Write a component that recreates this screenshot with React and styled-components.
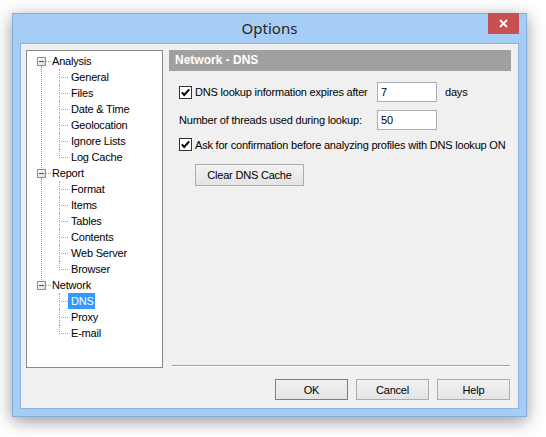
import React from "react"
import styled, { createGlobalStyle } from "styled-components"

const GlobalStyle = createGlobalStyle`
  html, body {
    margin: 0;
    padding: 0;
    background: #ffffff;
  }
  body {
    font-family: "Liberation Sans", Arial, sans-serif;
    font-size: 11px;
    color: #000;
  }
`

const treeData = [
  { title: "Analysis", items: ["General", "Files", "Date & Time", "Geolocation", "Ignore Lists", "Log Cache"] },
  { title: "Report", items: ["Format", "Items", "Tables", "Contents", "Web Server", "Browser"] },
  { title: "Network", items: ["DNS", "Proxy", "E-mail"] },
]

const Page = styled.div`
  padding: 13px 0 0 12px;
  height: 437px;
  box-sizing: border-box;
`

const Window = styled.div`
  width: 515px;
  height: 404px;
  box-sizing: border-box;
  background: #a6cdf6;
  border: 1px solid #86acd9;
  box-shadow: 0 4px 16px rgba(0, 0, 0, 0.42);
  display: flex;
  flex-direction: column;
`

const TitleBar = styled.div`
  height: 29px;
  display: grid;
  grid-template-columns: 40px 1fr 40px;
  align-items: start;
`

const Title = styled.div`
  grid-column: 2;
  text-align: center;
  font-family: "Segoe UI", "Noto Sans", sans-serif;
  font-size: 15px;
  line-height: 28px;
  color: #262626;
`

const CloseBtn = styled.div`
  grid-column: 3;
  justify-self: end;
  margin-right: 7px;
  width: 31px;
  height: 21px;
  margin-top: -1px;
  background: #c75050;
  display: flex;
  align-items: center;
  justify-content: center;
`

const Client = styled.div`
  margin: 0 7px 7px 7px;
  flex: 1;
  box-sizing: border-box;
  background: #f0f0f0;
  border: 1px solid #8fb2dc;
  display: flex;
  flex-direction: column;
`

const Body = styled.div`
  display: flex;
  padding: 6px 7px 0 5px;
`

const Tree = styled.div`
  width: 137px;
  height: 318px;
  box-sizing: border-box;
  background: #fff;
  border: 1px solid #828790;
  padding-top: 2px;
  letter-spacing: -0.2px;
`

const Group = styled.div`
  position: relative;
  &::before {
    content: "";
    display: ${(p) => (p.$last ? "none" : "block")};
    position: absolute;
    left: 14px;
    top: 13px;
    bottom: -3px;
    border-left: 1px dotted #a0a0a0;
  }
`

const ParentRow = styled.div`
  height: 16px;
  display: flex;
  align-items: center;
  padding-left: 10px;
`

const Dots = styled.span`
  width: 5px;
  border-top: 1px dotted #a0a0a0;
  margin-top: 1px;
`

const RowLabel = styled.span`
  line-height: 16px;
  padding: 0 1px 0 ${(p) => p.$pad || 1}px;
  white-space: nowrap;
  background: ${(p) => (p.$selected ? "#3399ff" : "transparent")};
  color: ${(p) => (p.$selected ? "#fff" : "#000")};
`

const ChildRow = styled.div`
  height: 16px;
  display: flex;
  margin-left: 32px;
`

const Connector = styled.span`
  width: 9px;
  box-sizing: border-box;
  align-self: flex-start;
  border-left: 1px dotted #a0a0a0;
  height: ${(p) => (p.$last ? "9px" : "16px")};
  ${(p) =>
    p.$last
      ? "border-bottom: 1px dotted #a0a0a0;"
      : "background: repeating-linear-gradient(90deg, #a0a0a0 0 1px, transparent 1px 2px) 1px 8px / 8px 1px no-repeat;"}
`

const Right = styled.div`
  flex: 1;
  margin-left: 6px;
  display: flex;
  flex-direction: column;
`

const Header = styled.div`
  height: 21px;
  background: #a0a0a0;
  color: #fff;
  font-weight: bold;
  font-size: 12px;
  line-height: 21px;
  padding-left: 6px;
`

const Form = styled.div`
  padding-left: 10px;
  padding-top: 11px;
  display: grid;
  grid-template-columns: 190px 60px auto;
  column-gap: 8px;
  letter-spacing: -0.2px;
`

const Cell = styled.div`
  display: flex;
  align-items: center;
  height: ${(p) => p.$h || 20}px;
  margin-top: ${(p) => p.$mt || 0}px;
  grid-column: ${(p) => p.$span || "auto"};
  white-space: nowrap;
`

const CheckLabel = styled.span`
  margin-left: 3px;
`

const TextInput = styled.div`
  width: 60px;
  height: 20px;
  box-sizing: border-box;
  background: #fff;
  border: 1px solid #abadb3;
  padding-left: 3px;
  line-height: 18px;
  margin-top: ${(p) => p.$mt || 0}px;
`

const Button = styled.div`
  width: ${(p) => p.$w || 73}px;
  height: ${(p) => p.$h || 21}px;
  box-sizing: border-box;
  border: 1px solid ${(p) => (p.$default ? "#3c8de6" : "#acacac")};
  background: linear-gradient(#f2f2f2, #e4e4e4);
  display: flex;
  align-items: center;
  justify-content: center;
  letter-spacing: -0.2px;
`

const ActionButton = styled(Button)`
  grid-column: 1 / span 3;
  margin: 12px 0 0 16px;
`

const Separator = styled.div`
  margin: auto 1px 1px 3px;
  border-top: 1px solid #a0a0a0;
  border-bottom: 1px solid #fff;
`

const Footer = styled.div`
  display: flex;
  justify-content: flex-end;
  gap: 8px;
  padding: 11px 8px 8px 0;
`

const MinusBox = () => (
  <svg width="9" height="9" viewBox="0 0 9 9">
    <defs>
      <linearGradient id="mb" x1="0" y1="0" x2="1" y2="1">
        <stop offset="0" stopColor="#ffffff" />
        <stop offset="1" stopColor="#d8d8d8" />
      </linearGradient>
    </defs>
    <rect x="0.5" y="0.5" width="8" height="8" fill="url(#mb)" stroke="#919191" />
    <line x1="2" y1="4.5" x2="7" y2="4.5" stroke="#2f56a8" strokeWidth="1" />
  </svg>
)

const CheckBox = () => (
  <svg width="13" height="13" viewBox="0 0 13 13">
    <rect x="0.5" y="0.5" width="12" height="12" fill="#fff" stroke="#333" />
    <path d="M2.8 6.4 L5.2 9 L10.2 3.4" fill="none" stroke="#000" strokeWidth="1.9" />
  </svg>
)

const CloseIcon = () => (
  <svg width="9" height="9" viewBox="0 0 9 9">
    <path d="M1 1 L8 8 M8 1 L1 8" stroke="#fff" strokeWidth="1.8" />
  </svg>
)

export default function App() {
  return (
    <Page>
      <GlobalStyle />
      <Window>
        <TitleBar>
          <Title>Options</Title>
          <CloseBtn>
            <CloseIcon />
          </CloseBtn>
        </TitleBar>
        <Client>
          <Body>
            <Tree>
              {treeData.map((g, gi) => (
                <Group key={g.title} $last={gi === treeData.length - 1}>
                  <ParentRow>
                    <MinusBox />
                    <Dots />
                    <RowLabel>{g.title}</RowLabel>
                  </ParentRow>
                  {g.items.map((it, i) => (
                    <ChildRow key={it}>
                      <Connector $last={i === g.items.length - 1} />
                      <RowLabel $pad={3} $selected={it === "DNS"}>
                        {it}
                      </RowLabel>
                    </ChildRow>
                  ))}
                </Group>
              ))}
            </Tree>
            <Right>
              <Header>Network - DNS</Header>
              <Form>
                <Cell>
                  <CheckBox />
                  <CheckLabel>DNS lookup information expires after</CheckLabel>
                </Cell>
                <TextInput>7</TextInput>
                <Cell>days</Cell>
                <Cell $mt={8}>Number of threads used during lookup:</Cell>
                <TextInput $mt={8}>50</TextInput>
                <Cell $mt={8} />
                <Cell $span="1 / span 3" $h={15} $mt={7}>
                  <CheckBox />
                  <CheckLabel>Ask for confirmation before analyzing profiles with DNS lookup ON</CheckLabel>
                </Cell>
                <ActionButton $w={109} $h={22}>
                  Clear DNS Cache
                </ActionButton>
              </Form>
              <Separator />
            </Right>
          </Body>
          <Footer>
            <Button $default>OK</Button>
            <Button>Cancel</Button>
            <Button>Help</Button>
          </Footer>
        </Client>
      </Window>
    </Page>
  )
}
